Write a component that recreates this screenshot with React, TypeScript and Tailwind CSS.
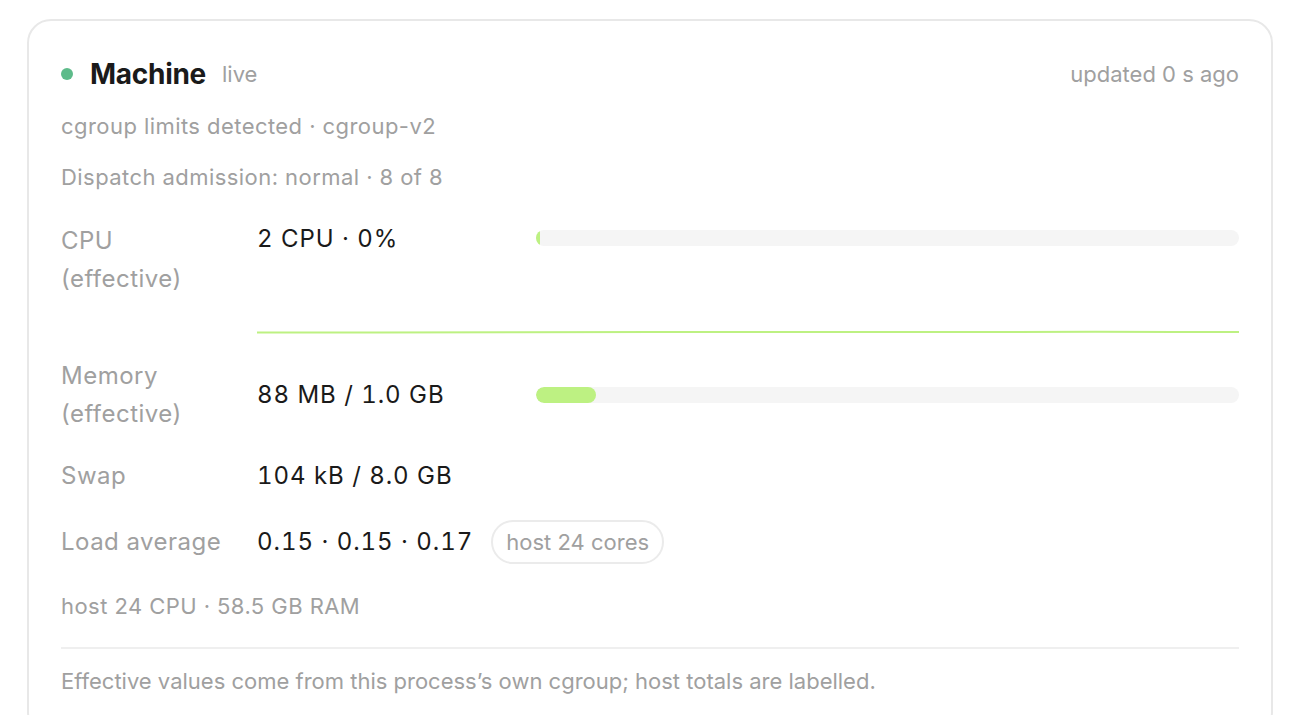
const cpuLine = [
  [0, 40.6], [120, 40.4], [260, 40.2], [400, 40], [520, 40.1], [640, 39.9], [760, 40.1], [840, 39.8], [920, 40], [984, 39.9],
];

function Bar({ pct }: { pct: number }) {
  return (
    <div className="flex-1 h-4 rounded-full bg-[#f5f5f5] overflow-hidden">
      <div className="h-full rounded-full bg-[#bdf182]" style={{ width: `${pct}%` }} />
    </div>
  );
}

export default function App() {
  return (
    <div className="min-h-[715px] bg-white pt-[19px] px-[27px] font-['Inter',sans-serif] overflow-hidden">
      <div className="border-2 border-[#e8e8e8] rounded-[24px] px-8 pt-[35px] pb-10">
        <div className="flex items-center h-9">
          <span className="w-3 h-3 rounded-full bg-[#5dbb8a]" />
          <span className="ml-[17px] text-[28px] font-bold text-[#1a1a1a] tracking-[-0.01em]">Machine</span>
          <span className="ml-4 text-[22px] text-[#a0a0a0]">live</span>
          <span className="ml-auto text-[22px] text-[#a0a0a0]">updated 0 s ago</span>
        </div>

        <div className="mt-[20px] text-[22px] leading-[28px] tracking-[0.02em] text-[#a0a0a0]">cgroup limits detected · cgroup-v2</div>
        <div className="mt-[23px] text-[22px] leading-[28px] tracking-[0.02em] text-[#a0a0a0]">Dispatch admission: normal · 8 of 8</div>

        <div className="mt-[31px] flex text-[24px] leading-[38px]">
          <div className="w-[196px] text-[#a0a0a0] tracking-[0.02em]">CPU<br />(effective)</div>
          <div className="flex-1">
            <div className="flex items-start">
              <div className="w-[279px] -mt-[2px] text-[#1a1a1a] tabular-nums tracking-[0.04em]">2 CPU · 0%</div>
              <div className="flex-1 flex mt-[8px]">
                <Bar pct={0.6} />
              </div>
            </div>
            <svg className="mt-[34px] w-full h-[42px]" viewBox="0 0 984 42" preserveAspectRatio="none">
              <polyline
                points={cpuLine.map(([x, y]) => `${x},${y}`).join(' ')}
                fill="none"
                stroke="#bdf182"
                strokeWidth="2"
              />
            </svg>
          </div>
        </div>

        <div className="mt-[23px] flex items-center text-[24px] leading-[38px]">
          <div className="w-[196px] text-[#a0a0a0] tracking-[0.02em]">Memory<br />(effective)</div>
          <div className="w-[279px] text-[#1a1a1a] tabular-nums tracking-[0.04em]">88 MB / 1.0 GB</div>
          <Bar pct={8.5} />
        </div>

        <div className="mt-[24px] flex items-center text-[24px] leading-[38px]">
          <div className="w-[196px] text-[#a0a0a0] tracking-[0.02em]">Swap</div>
          <div className="text-[#1a1a1a] tabular-nums tracking-[0.04em]">104 kB / 8.0 GB</div>
        </div>

        <div className="mt-[25px] flex items-center h-11 text-[24px]">
          <div className="w-[196px] text-[#a0a0a0] tracking-[0.02em]">Load average</div>
          <div className="text-[#1a1a1a] tabular-nums tracking-[0.04em]">0.15 · 0.15 · 0.17</div>
          <span className="ml-[18px] h-11 flex items-center px-[13px] rounded-full border-2 border-[#ebebeb] text-[22px] text-[#a0a0a0]">
            host 24 cores
          </span>
        </div>

        <div className="mt-[28px] text-[22px] leading-[28px] tracking-[0.02em] text-[#a0a0a0]">host 24 CPU · 58.5 GB RAM</div>

        <div className="mt-[27px] h-[2px] bg-[#efefef]" />

        <div className="mt-[18px] text-[22px] leading-[28px] text-[#a0a0a0]">
          Effective values come from this process’s own cgroup; host totals are labelled.
        </div>
      </div>
    </div>
  );
}
